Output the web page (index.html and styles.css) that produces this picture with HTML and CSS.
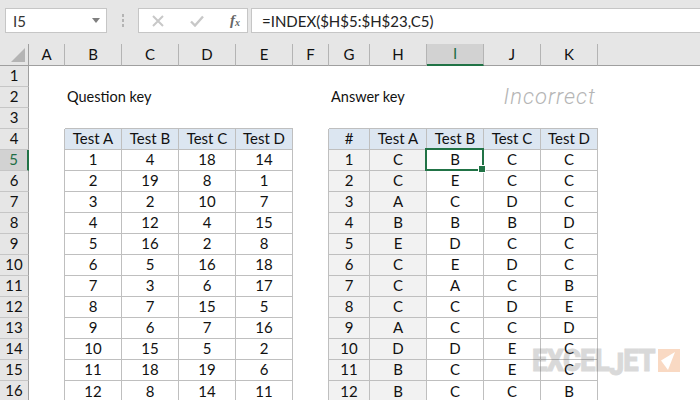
FILE: index.html
```html
<!DOCTYPE html>
<html lang="en">
<head>
    <meta charset="UTF-8">
    <title>Incorrect answers</title>
    <link rel="stylesheet" href="styles.css">
</head>
<body>
    <div class="toolbar">
        <div class="name-box">
            <span>I5</span>
            <svg class="name-arrow" width="8" height="5" viewBox="0 0 8 5"><path d="M0 0H8L4 5Z" fill="#7f7f7f"/></svg>
        </div>
        <div class="grip"><i></i><i></i><i></i></div>
        <div class="fx-box">
            <svg width="12" height="12" viewBox="0 0 12 12"><path d="M1 1L11 11M11 1L1 11" stroke="#c8c8c8" stroke-width="2" fill="none"/></svg>
            <svg width="14" height="12" viewBox="0 0 14 12"><path d="M1 6.5L5 10.5L13 1.5" stroke="#c8c8c8" stroke-width="2.4" fill="none"/></svg>
            <span class="fx">f<sub>x</sub></span>
        </div>
        <div class="formula">=INDEX($H$5:$H$23,C5)</div>
    </div>

    <table class="sheet">
        <colgroup>
            <col class="c-row"><col class="c-narrow">
            <col class="c-wide"><col class="c-wide"><col class="c-wide"><col class="c-wide">
            <col class="c-narrow"><col class="c-g">
            <col class="c-wide"><col class="c-wide"><col class="c-wide"><col class="c-wide">
            <col>
        </colgroup>
        <tr class="cols">
            <th class="corner"><svg width="14" height="14" viewBox="0 0 14 14"><path d="M14 0V14H0Z" fill="#b4b4b4"/></svg></th>
            <th>A</th><th>B</th><th>C</th><th>D</th><th>E</th><th>F</th><th>G</th><th>H</th>
            <th class="col-on">I</th><th>J</th><th>K</th><th class="col-end"></th>
        </tr>
        <tr><th class="row">1</th><td colspan="12"></td></tr>
        <tr>
            <th class="row">2</th><td></td>
            <td colspan="2" class="title">Question key</td><td></td><td></td><td></td>
            <td colspan="2" class="title">Answer key</td><td></td>
            <td colspan="2" class="verdict">Incorrect</td><td></td>
        </tr>
        <tr>
            <th class="row">3</th><td></td>
            <td class="above"></td><td class="above"></td><td class="above"></td><td class="above"></td>
            <td></td>
            <td class="above"></td><td class="above"></td><td class="above"></td><td class="above"></td><td class="above"></td>
            <td></td>
        </tr>
        <tr class="data">
            <th class="row">4</th><td class="off"></td>
            <td class="hd">Test A</td><td class="hd">Test B</td><td class="hd">Test C</td><td class="hd">Test D</td>
            <td class="off"></td>
            <td class="hd">#</td><td class="hd">Test A</td><td class="hd">Test B</td><td class="hd">Test C</td><td class="hd">Test D</td>
            <td class="off"></td>
        </tr>
        <tr class="data">
            <th class="row row-on">5</th><td class="off"></td>
            <td>1</td><td>4</td><td>18</td><td>14</td><td class="off"></td>
            <td class="key">1</td><td class="key">C</td>
            <td class="active">B<div class="selection"><span class="handle"></span></div></td><td>C</td><td>C</td><td class="off"></td>
        </tr>
        <tr class="data">
            <th class="row">6</th><td class="off"></td>
            <td>2</td><td>19</td><td>8</td><td>1</td><td class="off"></td>
            <td class="key">2</td><td class="key">C</td><td>E</td><td>C</td><td>C</td><td class="off"></td>
        </tr>
        <tr class="data">
            <th class="row">7</th><td class="off"></td>
            <td>3</td><td>2</td><td>10</td><td>7</td><td class="off"></td>
            <td class="key">3</td><td class="key">A</td><td>C</td><td>D</td><td>C</td><td class="off"></td>
        </tr>
        <tr class="data">
            <th class="row">8</th><td class="off"></td>
            <td>4</td><td>12</td><td>4</td><td>15</td><td class="off"></td>
            <td class="key">4</td><td class="key">B</td><td>B</td><td>B</td><td>D</td><td class="off"></td>
        </tr>
        <tr class="data">
            <th class="row">9</th><td class="off"></td>
            <td>5</td><td>16</td><td>2</td><td>8</td><td class="off"></td>
            <td class="key">5</td><td class="key">E</td><td>D</td><td>C</td><td>C</td><td class="off"></td>
        </tr>
        <tr class="data">
            <th class="row">10</th><td class="off"></td>
            <td>6</td><td>5</td><td>16</td><td>18</td><td class="off"></td>
            <td class="key">6</td><td class="key">C</td><td>E</td><td>D</td><td>C</td><td class="off"></td>
        </tr>
        <tr class="data">
            <th class="row">11</th><td class="off"></td>
            <td>7</td><td>3</td><td>6</td><td>17</td><td class="off"></td>
            <td class="key">7</td><td class="key">C</td><td>A</td><td>C</td><td>B</td><td class="off"></td>
        </tr>
        <tr class="data">
            <th class="row">12</th><td class="off"></td>
            <td>8</td><td>7</td><td>15</td><td>5</td><td class="off"></td>
            <td class="key">8</td><td class="key">C</td><td>C</td><td>D</td><td>E</td><td class="off"></td>
        </tr>
        <tr class="data">
            <th class="row">13</th><td class="off"></td>
            <td>9</td><td>6</td><td>7</td><td>16</td><td class="off"></td>
            <td class="key">9</td><td class="key">A</td><td>C</td><td>C</td><td>D</td><td class="off"></td>
        </tr>
        <tr class="data">
            <th class="row">14</th><td class="off"></td>
            <td>10</td><td>15</td><td>5</td><td>2</td><td class="off"></td>
            <td class="key">10</td><td class="key">D</td><td>D</td><td>E</td><td>C</td><td class="off"></td>
        </tr>
        <tr class="data">
            <th class="row">15</th><td class="off"></td>
            <td>11</td><td>18</td><td>19</td><td>6</td><td class="off"></td>
            <td class="key">11</td><td class="key">B</td><td>C</td><td>E</td><td>C</td><td class="off"></td>
        </tr>
        <tr class="data">
            <th class="row">16</th><td class="off"></td>
            <td>12</td><td>8</td><td>14</td><td>11</td><td class="off"></td>
            <td class="key">12</td><td class="key">B</td><td>C</td><td>C</td><td>B</td><td class="off"></td>
        </tr>
    </table>

    <div class="watermark">
        <span class="wordmark">EXCEL<span class="drop">J</span>ET</span>
        <svg width="22" height="23" viewBox="0 0 22 23"><rect width="22" height="23" fill="#f9d9c3"/><path d="M17 3L3 11.5L10 21Z" fill="#fff"/></svg>
    </div>
</body>
</html>
```

FILE: styles.css
```css
html, body {
    margin: 0;
    height: 400px;
    overflow: hidden;
}
body {
    position: relative;
    background-color: #fff;
    font-family: Lato, "Liberation Sans", sans-serif;
    font-size: 15px;
    color: #111;
}

/* formula bar */
.toolbar {
    display: flex;
    height: 44px;
    box-sizing: border-box;
    padding: 8px 0 11px 5px;
    background-color: #e6e6e6;
}
.name-box, .fx-box, .formula {
    box-sizing: border-box;
    background-color: #fff;
    border: 1px solid #c6c6c6;
    display: flex;
    align-items: center;
}
.name-box {
    width: 102px;
    padding: 0 6px 0 7px;
    justify-content: space-between;
    color: #333;
}
.grip {
    width: 31px;
    display: flex;
    flex-direction: column;
    align-items: center;
    justify-content: center;
    gap: 2px;
}
.grip i {
    width: 2px;
    height: 3px;
    background-color: #b4b4b4;
}
.fx-box {
    width: 110px;
    padding: 0 7px 0 13px;
    justify-content: space-between;
}
.fx {
    font-family: "Liberation Serif", serif;
    font-style: italic;
    font-weight: bold;
    font-size: 15px;
    color: #666;
}
.fx sub {
    font-size: 10px;
    vertical-align: -1px;
}
.formula {
    flex: 1;
    margin-left: 3px;
    padding-left: 10px;
    border-right: none;
    color: #222;
}

/* sheet */
.sheet {
    width: 700px;
    table-layout: fixed;
    border-collapse: separate;
    border-spacing: 0;
}
.c-row { width: 29px; }
.c-narrow { width: 36px; }
.c-g { width: 41px; }
.c-wide { width: 57px; }
.sheet tr { height: 21px; }
.sheet th, .sheet td {
    box-sizing: border-box;
    height: 21px;
    padding: 0 0 2px;
    line-height: 18px;
    text-align: center;
    font-weight: normal;
    white-space: nowrap;
}
.cols th {
    background-color: #e6e6e6;
    border-right: 1px solid #b4b4b4;
    border-bottom: 1px solid #9f9f9f;
}
.cols .corner {
    padding: 0 3px 0 0;
    text-align: right;
    border-right: 1px solid #9f9f9f;
}
.corner svg {
    display: block;
    margin-left: auto;
}
.cols .col-on {
    background-color: #d2d2d2;
    color: #1f6e45;
    border-bottom: 2px solid #217346;
}
.cols .col-end {
    border-right: none;
}
.row {
    background-color: #e6e6e6;
    border-right: 1px solid #9f9f9f;
    border-bottom: 1px solid #c6c6c6;
}
.sheet .row-on {
    background-color: #d2d2d2;
    color: #1f6e45;
    border-right: 2px solid #217346;
}
.sheet .title {
    text-align: left;
    padding-left: 2px;
    font-size: 14.5px;
}
.sheet .verdict {
    text-align: right;
    padding: 0 2px 2px 0;
    font-family: Roboto, sans-serif;
    font-style: italic;
    font-weight: 300;
    font-size: 22px;
    letter-spacing: 1px;
    color: #b5b5b5;
}
.sheet .above {
    border-bottom: 1px solid #bfbfbf;
}
.data td {
    border-right: 1px solid #bfbfbf;
    border-bottom: 1px solid #bfbfbf;
}
.data td.off {
    border-bottom: none;
}
.data:last-child td {
    border-bottom: none;
}
.data td.off:last-child {
    border-right: none;
}
.data .hd {
    background-color: #dce6f1;
}
.data .key {
    background-color: #f2f2f2;
}
.active {
    position: relative;
}

/* lies over the grid */
.selection {
    position: absolute;
    left: -2px;
    top: -2px;
    right: -1px;
    bottom: -1px;
    border: 2px solid #217346;
}
.handle {
    position: absolute;
    right: -4px;
    bottom: -4px;
    width: 6px;
    height: 6px;
    background-color: #217346;
    border: 1px solid #fff;
}
.watermark {
    position: absolute;
    left: 532px;
    top: 349px;
    display: flex;
    gap: 3px;
}
.wordmark {
    width: 123px;
    white-space: nowrap;
    font-family: Roboto, sans-serif;
    font-weight: 900;
    font-size: 32px;
    line-height: 23px;
    letter-spacing: -1px;
    color: #6e6e6e;
    opacity: 0.26;
    -webkit-text-stroke: 0.8px #6e6e6e;
    transform: scaleX(0.86);
    transform-origin: left;
}
.drop {
    display: inline-block;
    transform: translateY(4px);
}
```
